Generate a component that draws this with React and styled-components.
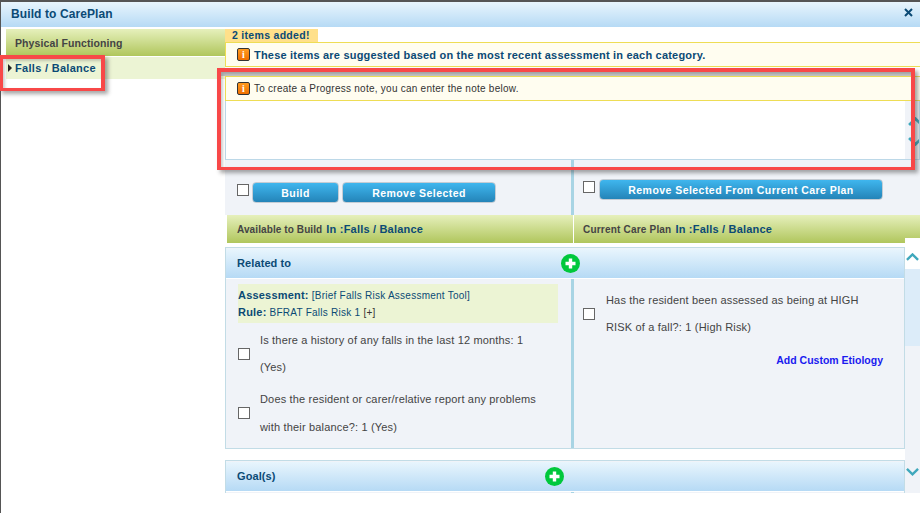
import React from "react";
import styled, { createGlobalStyle } from "styled-components";

const GlobalStyle = createGlobalStyle`
  html, body {
    margin: 0;
    padding: 0;
    background: #fff;
    overflow: hidden;
  }
  * { box-sizing: border-box; }
`;

const navy = "#0b4a75";
const blueBar = "linear-gradient(#e8f5fd, #b6daf5)";
const greenBar = "linear-gradient(#e6f0bc, #b0c65c)";

const Dialog = styled.div`
  position: relative;
  width: 920px;
  height: 513px;
  overflow: hidden;
  padding: 2px 0 0 1px;
  box-shadow: inset 1px 2px 0 #555;
  font-family: "Liberation Sans", Arial, sans-serif;
  font-size: 11px;
  color: #333;
`;

const TitleBar = styled.div`
  height: 25px;
  background: ${blueBar};
  display: flex;
  align-items: center;
  justify-content: space-between;
  padding: 0 7px 1px 10px;
  color: ${navy};
  font-weight: bold;
  font-size: 12px;
  letter-spacing: 0.1px;
`;

const CloseSvg = styled.svg`
  margin-bottom: 3px;
`;

const Body = styled.div`
  display: flex;
  height: 466px;
  overflow: hidden;
`;

const Sidebar = styled.div`
  width: 219px;
  margin: 2px 0 0 5px;
  flex: none;
`;

const Category = styled.div`
  height: 28px;
  padding-left: 9px;
  display: flex;
  align-items: center;
  background: ${greenBar};
  color: #444;
  font-weight: bold;
  font-size: 10.5px;
  letter-spacing: 0.1px;
  border-bottom: 1px solid #fff;
`;

const SubCategory = styled.div`
  height: 22px;
  padding: 0 0 1px 9px;
  display: flex;
  align-items: center;
  background: #ecf4d4;
  color: ${navy};
  font-weight: bold;
  font-size: 11px;
  letter-spacing: 0.3px;
`;

const Caret = styled.span`
  position: absolute;
  left: 8px;
  width: 0;
  height: 0;
  border-style: solid;
  border-width: 4px 0 4px 4px;
  border-color: transparent transparent transparent #222;
`;

const Main = styled.div`
  flex: 1;
  min-width: 0;
  padding-top: 2px;
`;

const AddedTag = styled.div`
  width: 93px;
  height: 13px;
  background: #ffe08a;
  color: ${navy};
  font-weight: bold;
  font-size: 10.5px;
  line-height: 13px;
  padding-left: 7px;
  letter-spacing: 0.3px;
`;

const Notice = styled.div`
  height: ${(p) => p.$height}px;
  margin-top: ${(p) => p.$top || 0}px;
  border-top: 1px solid #eedd55;
  border-bottom: 1px solid #eedd55;
  border-left: 1px solid #eedd55;
  background: #fffdf0;
  display: flex;
  align-items: center;
  gap: 4px;
  padding-left: 11px;
  color: ${(p) => (p.$strong ? navy : "#333")};
  font-weight: ${(p) => (p.$strong ? "bold" : "normal")};
  font-size: ${(p) => (p.$strong ? "11px" : "10px")};
  letter-spacing: ${(p) => (p.$strong ? "0.2px" : "0.25px")};
`;

const InfoBadge = styled.span`
  width: 13px;
  height: 13px;
  flex: none;
  border: 1px solid #333;
  border-radius: 2px;
  background: linear-gradient(#ff9a20, #f07000);
  color: #fff;
  font-size: 10px;
  font-weight: bold;
  line-height: 11px;
  text-align: center;
  font-family: "Liberation Serif", serif;
`;

const NoteBox = styled.div`
  height: 59px;
  border: 1px solid #bcd8e8;
  border-top: none;
  display: flex;
  justify-content: flex-end;
`;

const NoteGutter = styled.div`
  width: 14px;
  background: #f0f3f8;
  overflow: hidden;
  display: flex;
  flex-direction: column;
  align-items: flex-start;
  padding: 16px 0 0 3px;
  gap: 11px;
`;

const Work = styled.div`
  background: #f0f3f8;
  height: 333px;
`;

const Columns = styled.div`
  display: flex;
  height: 55px;
`;

const ActionCell = styled.div`
  display: flex;
  align-items: flex-start;
  gap: ${(p) => p.$gap}px;
  padding: ${(p) => p.$top}px 0 0 ${(p) => p.$left}px;
  width: ${(p) => p.$width}px;
  flex: ${(p) => (p.$width ? "none" : 1)};
  border-left: ${(p) => (p.$divided ? "3px solid #a8d4e4" : "none")};
`;

const Check = styled.span`
  width: 12px;
  height: 12px;
  flex: none;
  display: block;
  border: 1px solid #666;
  background: #fff;
  margin-top: ${(p) => p.$top || 0}px;
`;

const BlueButton = styled.button`
  width: ${(p) => p.$width}px;
  height: 21px;
  padding: 0;
  border: 1px solid #c4ccd4;
  border-radius: 4px;
  background: linear-gradient(#3fb6ee, #2484b8);
  color: #fff;
  font-family: inherit;
  font-weight: bold;
  font-size: 10.5px;
  letter-spacing: 0.45px;
`;

const HeadRow = styled.div`
  display: flex;
  height: 29px;
  padding-left: 2px;
  background: #fff;
  border-bottom: 1px solid #fff;
`;

const HeadCell = styled.div`
  width: ${(p) => p.$width}px;
  flex: ${(p) => (p.$width ? "none" : 1)};
  background: ${greenBar};
  border-left: ${(p) => (p.$divided ? "1px solid #fff" : "none")};
  display: flex;
  align-items: center;
  gap: 4px;
  padding-left: ${(p) => (p.$divided ? 9 : 10)}px;
  color: #444;
  font-weight: bold;
  font-size: 10px;
  letter-spacing: ${(p) => (p.$divided ? 0.2 : 0.1)}px;
`;

const HeadPlace = styled.span`
  color: ${navy};
  font-size: 11px;
  letter-spacing: 0.2px;
`;

const Panels = styled.div`
  background: #fff;
  width: 680px;
  padding-top: 3px;
`;

const Panel = styled.section`
  border: 1px solid #c2dce6;
  background: #f0f3f8;
  margin-bottom: 11px;
`;

const PanelHead = styled.div`
  position: relative;
  height: 30px;
  margin-top: 1px;
  background: ${blueBar};
  border-bottom: 1px solid #fff;
  display: flex;
  align-items: center;
  padding: 0 0 2px 11px;
  color: ${navy};
  font-weight: bold;
  font-size: 11px;
  letter-spacing: 0.1px;
`;

const PlusIcon = styled.svg`
  position: absolute;
  left: ${(p) => p.$left}px;
  top: 5px;
`;

const PanelBody = styled.div`
  display: flex;
  height: ${(p) => p.$height}px;
`;

const LeftPane = styled.div`
  width: 345px;
  flex: none;
  padding: 5px 0 0 12px;
`;

const RightPane = styled.div`
  flex: 1;
  min-width: 0;
  border-left: 3px solid #a8d4e4;
  padding: 8px 21px 0 9px;
`;

const Source = styled.div`
  width: 320px;
  height: 39px;
  background: #ecf4d4;
  color: ${navy};
  font-size: 10px;
  letter-spacing: 0.25px;
  line-height: 17px;
  padding-top: 3px;
  margin-bottom: 4px;
`;

const SourceLabel = styled.b`
  font-size: 11px;
  letter-spacing: 0.2px;
`;

const Expand = styled.span`
  color: #333;
`;

const Item = styled.div`
  display: flex;
  align-items: center;
  gap: ${(p) => p.$indent || 10}px;
  line-height: ${(p) => p.$line || 28}px;
  font-size: 11px;
  letter-spacing: 0.17px;
  color: #444;
  margin-bottom: ${(p) => p.$gap || 0}px;
`;

const ItemText = styled.div`
  width: 279px;
  flex: none;
`;

const CustomLink = styled.a`
  display: block;
  text-align: right;
  color: #1a1af0;
  font-weight: bold;
  font-size: 10.5px;
  margin-top: 13px;
`;

const ScrollRail = styled.div`
  position: absolute;
  right: 0;
  top: 238px;
  bottom: 20px;
  width: 15px;
  background: #f0f3f8;
`;

const ScrollTop = styled.div`
  height: 31px;
  background: #fff;
  display: flex;
  justify-content: center;
  padding-top: 15px;
`;

const ScrollThumb = styled.div`
  height: 77px;
  background: #dcecf9;
`;

const ScrollDown = styled.div`
  display: flex;
  justify-content: center;
  padding-top: 122px;
`;

const Callout = styled.div`
  position: absolute;
  left: ${(p) => p.$left}px;
  top: ${(p) => p.$top}px;
  width: ${(p) => p.$width}px;
  height: ${(p) => p.$height}px;
  border-style: solid;
  border-color: #f84848;
  border-width: 4px 4px 3px 4px;
  box-shadow: 3px 3px 4px rgba(60, 60, 60, 0.45),
    inset 2px 2px 3px rgba(60, 60, 60, 0.25)
    ${(p) => (p.$strip ? ", inset 0 4px 0 #c4c4c4" : "")};
  pointer-events: none;
`;

function Chevron({ up, size = 15 }) {
  return (
    <svg width={size} height={size * 0.6} viewBox="0 0 14 8.4" style={{ flex: "none" }}>
      <path
        d={up ? "M1 7.4L7 1.6l6 5.8" : "M1 1l6 5.8L13 1"}
        fill="none"
        stroke="#3fa8bc"
        strokeWidth="2.6"
      />
    </svg>
  );
}

function Plus({ left }) {
  return (
    <PlusIcon $left={left} width="19" height="19" viewBox="0 0 19 19">
      <circle cx="9.5" cy="9.5" r="9.5" fill="#00c83c" />
      <path d="M9.5 4.5v10M4.5 9.5h10" stroke="#fff" strokeWidth="3.4" />
    </PlusIcon>
  );
}

function CloseIcon() {
  return (
    <CloseSvg width="9" height="9" viewBox="0 0 9 9">
      <path d="M1 1l7 7M8 1L1 8" stroke={navy} strokeWidth="2" />
    </CloseSvg>
  );
}

export default function App() {
  return (
    <>
      <GlobalStyle />
      <Dialog>
        <TitleBar>
          Build to CarePlan
          <CloseIcon />
        </TitleBar>
        <Body>
          <Sidebar>
            <Category>Physical Functioning</Category>
            <SubCategory>
              <Caret />
              Falls / Balance
            </SubCategory>
          </Sidebar>
          <Main>
            <AddedTag>2 items added!</AddedTag>
            <Notice $height={25} $strong>
              <InfoBadge>i</InfoBadge>
              These items are suggested based on the most recent assessment in each category.
            </Notice>
            <Notice $height={25} $top={9}>
              <InfoBadge>i</InfoBadge>
              To create a Progress note, you can enter the note below.
            </Notice>
            <NoteBox>
              <NoteGutter>
                <Chevron up />
                <Chevron />
              </NoteGutter>
            </NoteBox>
            <Work>
              <Columns>
                <ActionCell $width={346} $left={12} $top={22} $gap={3}>
                  <Check $top={2} />
                  <BlueButton $width={87}>Build</BlueButton>
                  <BlueButton $width={154}>Remove Selected</BlueButton>
                </ActionCell>
                <ActionCell $divided $left={9} $top={19} $gap={4}>
                  <Check $top={2} />
                  <BlueButton $width={284}>Remove Selected From Current Care Plan</BlueButton>
                </ActionCell>
              </Columns>
              <HeadRow>
                <HeadCell $width={346}>
                  Available to Build <HeadPlace>In :Falls / Balance</HeadPlace>
                </HeadCell>
                <HeadCell $divided>
                  Current Care Plan <HeadPlace>In :Falls / Balance</HeadPlace>
                </HeadCell>
              </HeadRow>
              <Panels>
                <Panel>
                  <PanelHead>
                    Related to
                    <Plus left={335} />
                  </PanelHead>
                  <PanelBody $height={169}>
                    <LeftPane>
                      <Source>
                        <SourceLabel>Assessment:</SourceLabel> [Brief Falls Risk Assessment Tool]
                        <br />
                        <SourceLabel>Rule:</SourceLabel> BFRAT Falls Risk 1 <Expand>[+]</Expand>
                      </Source>
                      <Item $line={27} $gap={4}>
                        <Check />
                        <ItemText>Is there a history of any falls in the last 12 months: 1 (Yes)</ItemText>
                      </Item>
                      <Item>
                        <Check />
                        <ItemText>Does the resident or carer/relative report any problems with their balance?: 1 (Yes)</ItemText>
                      </Item>
                    </LeftPane>
                    <RightPane>
                      <Item $line={27} $indent={11}>
                        <Check />
                        <ItemText>Has the resident been assessed as being at HIGH RISK of a fall?: 1 (High Risk)</ItemText>
                      </Item>
                      <CustomLink>Add Custom Etiology</CustomLink>
                    </RightPane>
                  </PanelBody>
                </Panel>
                <Panel>
                  <PanelHead>
                    Goal(s)
                    <Plus left={319} />
                  </PanelHead>
                  <PanelBody $height={30}>
                    <LeftPane />
                    <RightPane />
                  </PanelBody>
                </Panel>
              </Panels>
            </Work>
          </Main>
        </Body>
        <ScrollRail>
          <ScrollTop>
            <Chevron up size={13} />
          </ScrollTop>
          <ScrollThumb />
          <ScrollDown>
            <Chevron size={13} />
          </ScrollDown>
        </ScrollRail>
        <Callout $left={-1} $top={55} $width={106} $height={36} />
        <Callout $strip $left={217} $top={68} $width={698} $height={102} />
      </Dialog>
    </>
  );
}
